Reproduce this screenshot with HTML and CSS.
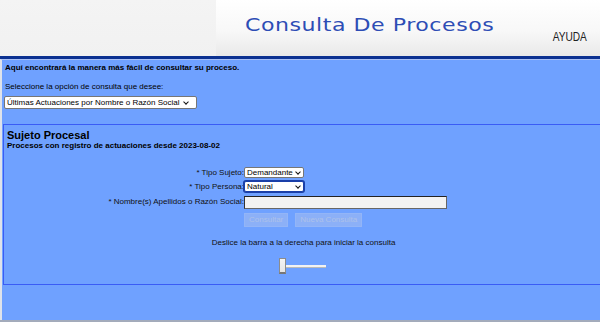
FILE: index.html
```html
<!DOCTYPE html>
<html lang="es">
<head>
    <meta charset="UTF-8">
    <title>Consulta De Procesos</title>
    <link rel="stylesheet" href="styles.css">
</head>
<body>
    <div class="header">
        <div class="header-left"></div>
        <div class="header-main">
            <h1 class="title">Consulta De Procesos</h1>
            <a class="help">AYUDA</a>
        </div>
    </div>

    <div class="content">
        <p class="intro">Aquí encontrará la manera más fácil de consultar su proceso.</p>
        <p class="pick">Seleccione la opción de consulta que desee:</p>
        <div class="select-wrap wide">
            <select>
                <option>Últimas Actuaciones por Nombre o Razón Social</option>
            </select>
        </div>

        <div class="panel">
            <h2 class="panel-title">Sujeto Procesal</h2>
            <p class="panel-sub">Procesos con registro de actuaciones desde 2023-08-02</p>

            <div class="form">
                <label>* Tipo Sujeto:</label>
                <div class="select-wrap small"><select><option>Demandante</option></select></div>
                <label>* Tipo Persona:</label>
                <div class="select-wrap small focused"><select><option>Natural</option></select></div>
                <label>* Nombre(s) Apellidos o Razón Social:</label>
                <input type="text" class="name">
                <span></span>
                <div class="actions">
                    <button disabled>Consultar</button>
                    <button disabled>Nueva Consulta</button>
                </div>
            </div>

            <p class="hint">Deslice la barra a la derecha para iniciar la consulta</p>
            <div class="slider">
                <span class="knob"></span>
                <span class="track"></span>
            </div>
        </div>
    </div>
    <div class="footer"></div>
</body>
</html>
```

FILE: styles.css
```css
body {
    margin: 0;
    font-family: "Liberation Sans", Arial, sans-serif;
    font-size: 8px;
    line-height: 10px;
    color: #000;
    background-color: #6fa1ff;
    overflow: hidden;
}

p {
    margin: 0;
}

/* header */
.header {
    display: flex;
    height: 56px;
    border-bottom: 3px solid #0b3191;
}

.header-left {
    width: 216px;
    background: linear-gradient(to bottom, #f4f4f4 0%, #f1f1f1 100%);
}

.header-main {
    flex: 1;
    position: relative;
    background: linear-gradient(to bottom, #ffffff 0%, #f8f8f8 55%, #e9e9e9 100%);
}

.title {
    display: inline-block;
    margin: 15px 0 0 29px;
    font-family: "DejaVu Sans", sans-serif;
    font-weight: normal;
    font-size: 17px;
    line-height: 20px;
    letter-spacing: 0.4px;
    color: #2d4db5;
    transform: scaleX(1.3);
    transform-origin: left top;
}

.help {
    position: absolute;
    right: 13px;
    top: 30px;
    font-size: 13px;
    line-height: 13px;
    color: #222;
    transform: scaleX(0.78);
    transform-origin: right top;
}

/* main area */
.content {
    height: 257px;
    border-top: 1px solid #a9c0f5;
    border-left: 2px solid #dfe3ea;
    padding: 3px 0 0 1px;
}

.intro {
    margin-left: 2px;
    font-weight: bold;
}

.pick {
    margin: 9px 0 0 2px;
}

.select-wrap {
    position: relative;
    box-sizing: border-box;
    border: 1px solid #767676;
    border-radius: 2px;
    background-color: #fff;
}

.select-wrap select {
    display: block;
    width: 100%;
    height: 100%;
    margin: 0;
    padding: 0 0 0 2px;
    border: none;
    background: transparent;
    font-family: inherit;
    font-size: 8px;
    color: #000;
    appearance: none;
    outline: none;
}

.select-wrap::after {
    content: "";
    position: absolute;
    right: 5px;
    top: 50%;
    width: 3px;
    height: 3px;
    margin-top: -3px;
    border-right: 1.5px solid #111;
    border-bottom: 1.5px solid #111;
    transform: rotate(45deg);
}

.wide {
    width: 193px;
    height: 13px;
    margin: 4px 0 0 1px;
}

.wide::after {
    right: 8px;
}

.panel {
    margin-top: 15px;
    height: 154px;
    border: 1px solid #3a5cf5;
    border-right: none;
    padding: 5px 0 0 3px;
}

.panel-title {
    margin: 0;
    font-size: 11px;
    line-height: 11px;
}

.panel-sub {
    font-weight: bold;
    line-height: 9px;
}

/* form */
.form {
    display: grid;
    grid-template-columns: 237px 1fr;
    grid-auto-rows: auto;
    row-gap: 3px;
    margin-top: 17px;
    align-items: center;
}

.form label {
    text-align: right;
    color: #111;
}

.small {
    width: 60px;
    height: 11px;
}

.small::after {
    right: 3px;
}

.focused {
    border-color: #1a3fa8;
    box-shadow: 0 0 0 1px #1a3fa8;
}

.name {
    box-sizing: border-box;
    width: 203px;
    height: 13px;
    margin: 1px 0 0 0;
    padding: 1px;
    border: 1px solid #666;
    border-top-color: #222;
    border-left-color: #333;
    background-color: #f2f2f2;
}

.actions {
    display: flex;
    gap: 7px;
    margin-top: 1px;
}

.actions button {
    height: 14px;
    padding: 0 4px;
    font-family: inherit;
    font-size: 8px;
    line-height: 10px;
    color: #adc1ea;
    background-color: #8cb0f7;
    border: 1px solid #93b5f7;
}

.hint {
    margin-top: 11px;
    text-align: center;
    color: #111;
}

/* slider */
.slider {
    display: flex;
    align-items: center;
    height: 16px;
    margin: 10px 0 0 272px;
}

.knob {
    box-sizing: border-box;
    width: 7px;
    height: 16px;
    background: linear-gradient(to bottom, #f4f4f4 0%, #e6e6e6 100%);
    border: 1px solid #8c8c8c;
    border-bottom: 2px solid #777;
}

.track {
    width: 40px;
    height: 2px;
    background-color: #f2f2f2;
    border-bottom: 1px solid #b9b9b9;
}

.footer {
    height: 4px;
    background-color: #a3abbb;
}
```
